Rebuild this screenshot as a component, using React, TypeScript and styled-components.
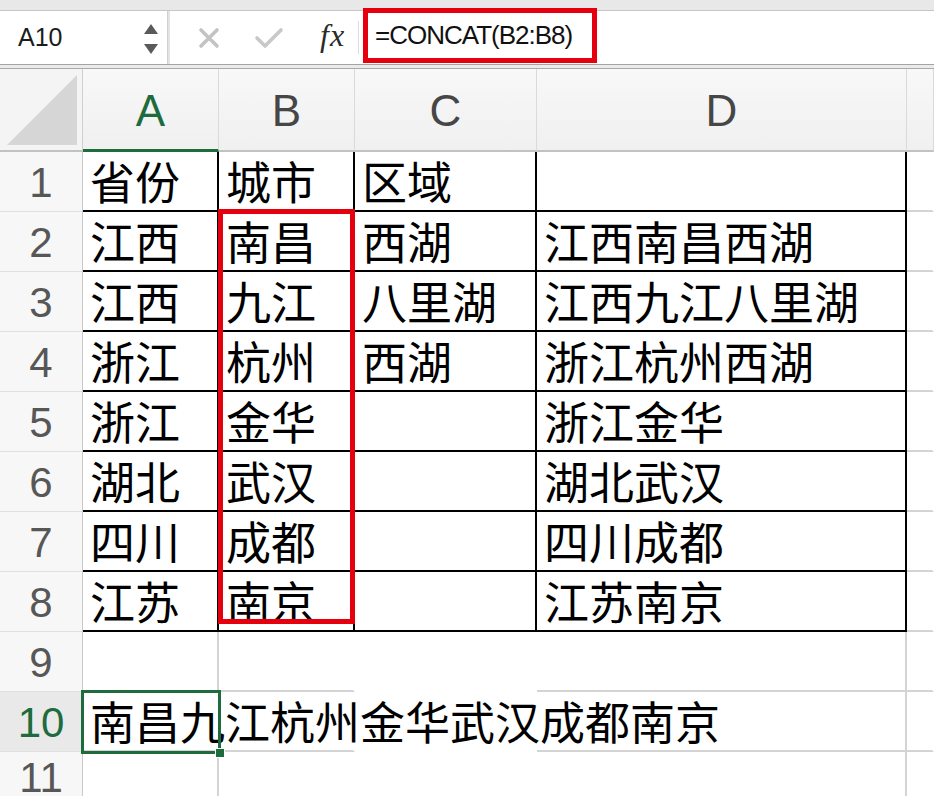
import React from 'react';
import styled, { createGlobalStyle } from 'styled-components';

const GlobalStyle = createGlobalStyle`
	html, body {
		margin: 0;
		padding: 0;
		background: #ffffff;
		overflow: hidden;
	}
	* {
		box-sizing: border-box;
	}
`;

const CJK = `'Noto Sans CJK SC', 'Noto Sans', sans-serif`;
const LATIN = `'Liberation Sans', Arial, sans-serif`;
const GREEN = '#1e6b3e';
const GRID = '#d4d4d4';
const INK = '#000000';

const Page = styled.div`
	width: 934px;
	height: 796px;
	overflow: hidden;
	display: flex;
	flex-direction: column;
	background: #ffffff;
`;

const TopStrip = styled.div`
	height: 11px;
	flex: 0 0 auto;
	background: #e8e8e8;
	border-bottom: 1px solid #c6c6c6;
`;

const FormulaBar = styled.div`
	height: 54px;
	flex: 0 0 auto;
	display: flex;
	align-items: stretch;
	background: #ffffff;
	border-bottom: 1px solid #a4a4a4;
`;

const NameBox = styled.div`
	width: 167px;
	display: flex;
	align-items: center;
	justify-content: space-between;
	padding: 0 9px 0 18px;
	font-family: ${LATIN};
	font-size: 25px;
	color: #1c1c1c;
`;

const Spinner = styled.div`
	display: flex;
	flex-direction: column;
	gap: 10px;
	margin-top: 2px;
`;

const Arrow = styled.div<{ $down?: boolean }>`
	width: 0;
	height: 0;
	border-left: 7px solid transparent;
	border-right: 7px solid transparent;
	${(p) =>
		p.$down
			? 'border-top: 10px solid #5a5a5a;'
			: 'border-bottom: 10px solid #5a5a5a;'}
`;

const Groove = styled.div`
	width: 3px;
	background: #e4e4e4;
	border-left: 1px solid #d2d2d2;
`;

const ActionArea = styled.div`
	width: 188px;
	display: flex;
	align-items: center;
	padding-left: 28px;
	gap: 34px;
`;

const Fx = styled.span`
	font-family: 'Liberation Serif', 'Times New Roman', serif;
	font-style: italic;
	font-size: 32px;
	color: #2a2a2a;
	margin-left: 2px;
	margin-top: -4px;
	letter-spacing: 1px;
`;

const BarSeparator = styled.div`
	width: 1px;
	margin: 10px 0;
	background: #dcdcdc;
`;

const FormulaBox = styled.div`
	width: 234px;
	margin: -3px 0 1px 4px;
	border: 5px solid #e6000d;
	display: flex;
	align-items: center;
	padding-left: 7px;
	font-family: ${LATIN};
	font-size: 26px;
	letter-spacing: -1px;
	color: #111111;
`;

const BarGap = styled.div`
	height: 4px;
	flex: 0 0 auto;
	background: #ebebeb;
	border-bottom: 1px solid #aaaaaa;
`;

const Sheet = styled.div`
	flex: 1 1 auto;
	display: grid;
	grid-template-columns: 83px 136px 136px 182px 370px 1fr;
	grid-template-rows: 83px repeat(10, 60px) 1fr;
`;

const Corner = styled.div`
	grid-row: 1;
	grid-column: 1;
	display: flex;
	justify-content: flex-end;
	align-items: flex-end;
	padding: 0 5px 5px 0;
	background: #f4f4f4;
	border-right: 1px solid #cfcfcf;
	border-bottom: 2px solid #c2c2c2;
`;

const CornerTriangle = styled.div`
	width: 70px;
	height: 70px;
	background: #d6d6d6;
	clip-path: polygon(100% 0, 100% 100%, 0 100%);
`;

const ColHeader = styled.div<{ $col: number; $active?: boolean }>`
	grid-row: 1;
	grid-column: ${(p) => p.$col};
	display: flex;
	align-items: center;
	justify-content: center;
	background: linear-gradient(#f8f8f8, #f0f0f0);
	border-right: 1px solid #dadada;
	border-bottom: ${(p) => (p.$active ? `3px solid ${GREEN}` : '2px solid #c2c2c2')};
	font-family: ${LATIN};
	font-size: 44px;
	padding-top: ${(p) => (p.$active ? '3px' : '2px')};
	color: ${(p) => (p.$active ? GREEN : '#464646')};
`;

const RowHeader = styled.div<{ $row: number; $active?: boolean }>`
	grid-row: ${(p) => p.$row};
	grid-column: 1;
	display: flex;
	align-items: center;
	justify-content: center;
	background: ${(p) => (p.$active ? '#e9e9e9' : '#f7f7f7')};
	border-right: 1px solid #c9c9c9;
	border-bottom: 1px solid #e0e0e0;
	font-family: ${LATIN};
	font-size: 42px;
	padding-top: 2px;
	color: ${(p) => (p.$active ? GREEN : '#575757')};
`;

const Cell = styled.div<{
	$row: number;
	$col: number;
	$right?: string;
	$bottom?: string;
	$lift?: boolean;
}>`
	grid-row: ${(p) => p.$row};
	grid-column: ${(p) => p.$col};
	position: relative;
	z-index: ${(p) => (p.$lift ? 2 : 0)};
	padding-left: 7px;
	font-family: ${CJK};
	font-size: 45px;
	line-height: 58px;
	color: #000000;
	white-space: nowrap;
	border-right: ${(p) => (p.$right ? `2px solid ${p.$right}` : '2px solid transparent')};
	border-bottom: ${(p) => (p.$bottom ? `2px solid ${p.$bottom}` : '2px solid transparent')};
`;

const RangeMark = styled.div`
	grid-column: 3;
	grid-row: 3 / 10;
	margin: -3px 0 8px -1px;
	border: 5px solid #e6000d;
	pointer-events: none;
	z-index: 3;
`;

const Selection = styled.div`
	grid-column: 2;
	grid-row: 11;
	position: relative;
	margin: -2px;
	border: 3px solid ${GREEN};
	pointer-events: none;
	z-index: 3;
`;

const FillHandle = styled.div`
	position: absolute;
	right: -7px;
	bottom: -7px;
	width: 10px;
	height: 10px;
	background: ${GREEN};
	border: 1px solid #ffffff;
`;

const columns = ['A', 'B', 'C', 'D'];

const table: string[][] = [
	['省份', '城市', '区域', ''],
	['江西', '南昌', '西湖', '江西南昌西湖'],
	['江西', '九江', '八里湖', '江西九江八里湖'],
	['浙江', '杭州', '西湖', '浙江杭州西湖'],
	['浙江', '金华', '', '浙江金华'],
	['湖北', '武汉', '', '湖北武汉'],
	['四川', '成都', '', '四川成都'],
	['江苏', '南京', '', '江苏南京'],
];

// rows 9-11 sit outside the bordered table, only faint gridlines there
const looseRows: { right?: string; bottom?: string }[][] = [
	[
		{ right: GRID, bottom: GRID },
		{ bottom: GRID },
		{},
		{ right: GRID, bottom: GRID },
		{ bottom: GRID },
	],
	[
		{ bottom: GRID },
		{ bottom: GRID },
		{},
		{ right: GRID, bottom: GRID },
		{ bottom: GRID },
	],
	[{ right: GRID }, {}, {}, { right: GRID }, {}],
];

const CrossIcon = () => (
	<svg width="22" height="22" viewBox="0 0 22 22">
		<path d="M3 3 L19 19 M19 3 L3 19" stroke="#c3c3c3" strokeWidth="3.6" strokeLinecap="round" />
	</svg>
);

const CheckIcon = () => (
	<svg width="30" height="22" viewBox="0 0 30 22">
		<path d="M3 11 L11 19 L27 3" stroke="#c8c8c8" strokeWidth="3.6" fill="none" strokeLinecap="round" strokeLinejoin="round" />
	</svg>
);

export default function App() {
	return (
		<Page>
			<GlobalStyle />
			<TopStrip />
			<FormulaBar>
				<NameBox>
					A10
					<Spinner>
						<Arrow />
						<Arrow $down />
					</Spinner>
				</NameBox>
				<Groove />
				<ActionArea>
					<CrossIcon />
					<CheckIcon />
					<Fx>fx</Fx>
				</ActionArea>
				<BarSeparator />
				<FormulaBox>=CONCAT(B2:B8)</FormulaBox>
			</FormulaBar>
			<BarGap />
			<Sheet>
				<Corner>
					<CornerTriangle />
				</Corner>
				{columns.map((c, i) => (
					<ColHeader key={c} $col={i + 2} $active={c === 'A'}>
						{c}
					</ColHeader>
				))}
				<ColHeader $col={6} />

				{table.map((row, r) => (
					<React.Fragment key={r}>
						<RowHeader $row={r + 2}>{r + 1}</RowHeader>
						{row.map((text, c) => (
							<Cell key={c} $row={r + 2} $col={c + 2} $right={INK} $bottom={INK}>
								{text}
							</Cell>
						))}
						<Cell $row={r + 2} $col={6} $bottom={GRID} />
					</React.Fragment>
				))}

				{looseRows.map((row, i) => {
					const n = i + 9;
					return (
						<React.Fragment key={n}>
							<RowHeader $row={n + 1} $active={n === 10}>
								{n}
							</RowHeader>
							{row.map((line, c) => (
								<Cell
									key={c}
									$row={n + 1}
									$col={c + 2}
									$right={line.right}
									$bottom={line.bottom}
									$lift={n === 10 && c === 0}
								>
									{n === 10 && c === 0 ? '南昌九江杭州金华武汉成都南京' : ''}
								</Cell>
							))}
						</React.Fragment>
					);
				})}

				<RangeMark />
				<Selection>
					<FillHandle />
				</Selection>
			</Sheet>
		</Page>
	);
}
